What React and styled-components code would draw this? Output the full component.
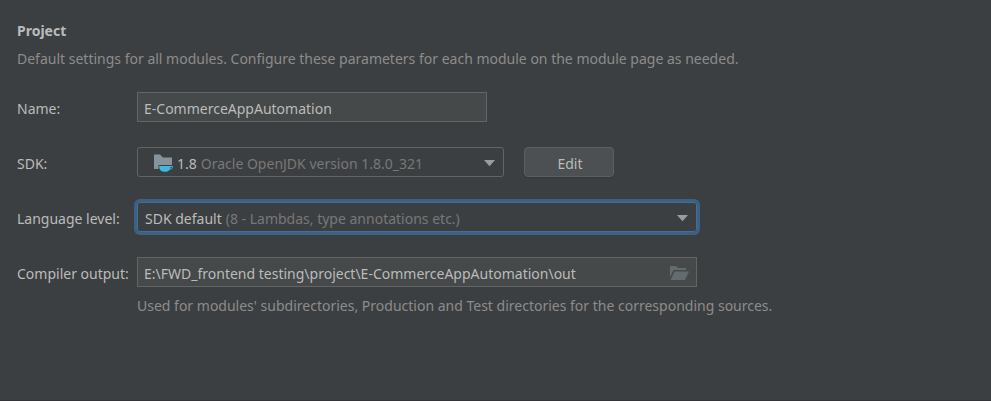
import React, { useState } from "react";
import styled, { createGlobalStyle, css } from "styled-components";

const GlobalStyle = createGlobalStyle`
  *, *::before, *::after { box-sizing: border-box; }
  body {
    margin: 0;
    background: #3c3f41;
    color: #bbbbbb;
    font-family: "Noto Sans", "Segoe UI", sans-serif;
    font-size: 14px;
    line-height: 20px;
  }
`;

const Page = styled.main`
  min-height: 100vh;
  padding: 21px 17px;
  border-bottom: 1px solid #323438;
`;

const Title = styled.h1`
  margin: 0 0 8px;
  font-size: 14px;
  line-height: 20px;
  font-weight: 700;
`;

const Description = styled.p`
  margin: 0 0 23px;
  color: #8c8c8c;
`;

const Form = styled.form`
  display: grid;
  grid-template-columns: 120px minmax(0, 560px);
  align-items: start;
  row-gap: 21px;
`;

const Label = styled.label`
  line-height: 34px;
  white-space: nowrap;
`;

const Row = styled.div`
  display: flex;
  gap: 20px;
`;

const fieldText = css`
  font: inherit;
  color: #bbbbbb;
`;

const TextInput = styled.input`
  ${fieldText}
  flex: 1;
  min-width: 0;
  max-width: ${(p) => p.$max || "none"};
  height: 30px;
  padding: 2px 6px 0;
  border: 1px solid #646464;
  background: #45494a;
  outline: none;
`;

const PathBox = styled.div`
  display: flex;
  align-items: center;
  height: 30px;
  padding-right: 7px;
  border: 1px solid #646464;
  background: #45494a;
`;

const PathInput = styled(TextInput)`
  height: 28px;
  border: 0;
  padding: 2px 6px 0;
  background: transparent;
`;

const BrowseButton = styled.button`
  display: flex;
  padding: 0;
  border: 0;
  background: none;
`;

const Combo = styled.div`
  display: grid;
  flex: 1;
  min-width: 0;
  max-width: ${(p) => p.$max || "none"};
  height: 30px;
  border: 1px solid ${(p) => (p.$active ? "#466d94" : "#646464")};
  border-radius: 3px;
  box-shadow: ${(p) => (p.$active ? "0 0 0 3px #3d6185" : "none")};
`;

const NativeSelect = styled.select`
  grid-area: 1 / 1;
  width: 100%;
  padding: 0 7px;
  border: 0;
  outline: none;
  appearance: none;
  background: transparent;
  font: inherit;
  color: transparent;

  option { color: #bbbbbb; background: #3c3f41; }
`;

const ComboFace = styled.div`
  grid-area: 1 / 1;
  display: flex;
  align-items: center;
  gap: 4px;
  min-width: 0;
  padding: 2px 8px 0 ${(p) => (p.$indent ? "16px" : "7px")};
  pointer-events: none;
  white-space: nowrap;
`;

const Value = styled.span`
  padding-top: 2px;
`;

const Muted = styled.span`
  flex: 1;
  padding-top: 2px;
  overflow: hidden;
  text-overflow: ellipsis;
  color: #787878;
`;

const Button = styled.button`
  ${fieldText}
  width: 90px;
  height: 30px;
  padding: 4px 0 0 2px;
  border: 1px solid #5e6060;
  border-radius: 4px;
  background: #4c5052;
  box-shadow: 0 1px 0 #36393b;
`;

const OutputField = styled.div`
  display: grid;
  grid-template-columns: minmax(0, 1fr);
  row-gap: 9px;
`;

const Hint = styled.p`
  margin: 0;
  color: #8c8c8c;

  @media (min-width: 820px) {
    white-space: nowrap;
  }
`;

const Arrow = () => (
  <svg width="11" height="7" viewBox="0 0 11 7" aria-hidden="true">
    <path d="M0 0H11L5.5 6.2Z" fill="#9a9da0" />
  </svg>
);

const JdkIcon = () => (
  <svg width="19" height="18" viewBox="0 0 19 18" aria-hidden="true">
    <path d="M0 0.5H6L9 3.5H18V11H4.5V15H0Z" fill="#87939a" />
    <path
      d="M5.2 12H16.5V13C16.5 16 14.5 17.8 10.8 17.8S5.2 16 5.2 13Z"
      fill="#40b6e0"
    />
    <path
      d="M16 12.5H18.5V13.6C18.5 14.4 17.3 15 15.5 15.3"
      fill="none"
      stroke="#40b6e0"
    />
  </svg>
);

const FolderIcon = () => (
  <svg width="19" height="15" viewBox="0 0 19 15" aria-hidden="true">
    <path d="M0 1H6L8 3H16V5H3.5L0 12Z" fill="#646b6f" />
    <path d="M4.5 6.5H19L15 15H0.5Z" fill="#646b6f" />
  </svg>
);

function ComboBox({ id, options, active, max, icon }) {
  const [value, setValue] = useState(options[0].name);
  const current = options.find((o) => o.name === value);
  return (
    <Combo $active={active} $max={max}>
      <NativeSelect
        id={id}
        value={value}
        onChange={(e) => setValue(e.target.value)}
      >
        {options.map((o) => (
          <option key={o.name} value={o.name}>
            {o.name} {o.detail}
          </option>
        ))}
      </NativeSelect>
      <ComboFace $indent={Boolean(icon)} aria-hidden="true">
        {icon}
        <Value>{current.name}</Value>
        <Muted>{current.detail}</Muted>
        <Arrow />
      </ComboFace>
    </Combo>
  );
}

export default function App() {
  return (
    <>
      <GlobalStyle />
      <Page>
        <Title>Project</Title>
        <Description>
          Default settings for all modules. Configure these parameters for each
          module on the module page as needed.
        </Description>
        <Form>
          <Label htmlFor="name">Name:</Label>
          <Row>
            <TextInput
              id="name"
              $max="350px"
              defaultValue="E-CommerceAppAutomation"
            />
          </Row>

          <Label htmlFor="sdk">SDK:</Label>
          <Row>
            <ComboBox
              id="sdk"
              max="367px"
              icon={<JdkIcon />}
              options={[
                { name: "1.8", detail: "Oracle OpenJDK version 1.8.0_321" },
              ]}
            />
            <Button type="button">Edit</Button>
          </Row>

          <Label htmlFor="level">Language level:</Label>
          <Row>
            <ComboBox
              id="level"
              active
              options={[
                {
                  name: "SDK default",
                  detail: "(8 - Lambdas, type annotations etc.)",
                },
              ]}
            />
          </Row>

          <Label htmlFor="output">Compiler output:</Label>
          <OutputField>
            <PathBox>
              <PathInput
                id="output"
                defaultValue={
                  "E:\\FWD_frontend testing\\project\\E-CommerceAppAutomation\\out"
                }
              />
              <BrowseButton type="button" aria-label="Browse">
                <FolderIcon />
              </BrowseButton>
            </PathBox>
            <Hint>
              Used for modules' subdirectories, Production and Test directories
              for the corresponding sources.
            </Hint>
          </OutputField>
        </Form>
      </Page>
    </>
  );
}
